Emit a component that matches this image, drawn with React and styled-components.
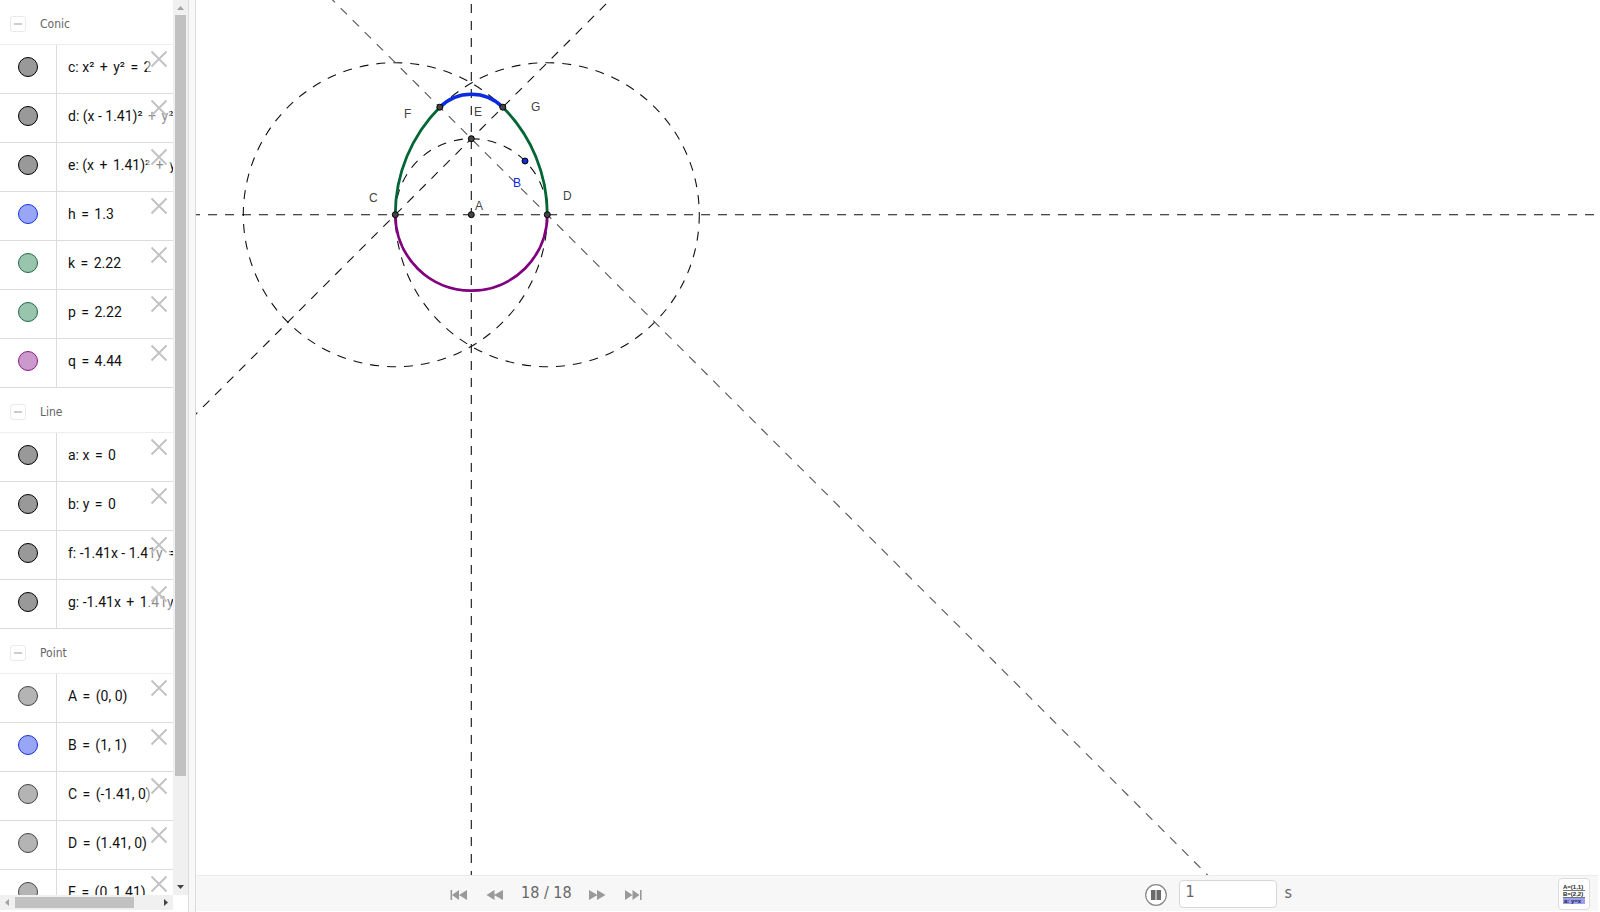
import React, { useState } from "react";
import styled, { createGlobalStyle } from "styled-components";

const GlobalStyle = createGlobalStyle`
  * {
    box-sizing: border-box;
  }
  body {
    margin: 0;
    background: #fff;
    font-family: "DejaVu Sans Condensed", "DejaVu Sans", sans-serif;
  }
  button {
    padding: 0;
    border: none;
    background: none;
    cursor: pointer;
  }
`;

const App = styled.div`
  display: flex;
  height: 100vh;
  padding-right: 2px;
  overflow: hidden;
`;

/* algebra view */

const Sidebar = styled.aside`
  display: grid;
  grid-template-columns: 1fr 15px;
  grid-template-rows: 1fr 15px;
  flex: none;
  width: 188px;
  padding-bottom: 2px;
`;

const List = styled.div`
  min-height: 0;
  overflow: hidden;
`;

const GroupHeader = styled.div`
  display: flex;
  align-items: center;
  gap: 14px;
  height: 45px;
  padding: 4px 0 0 10px;
  border-bottom: 1px solid #eee;
`;

const Collapse = styled.button`
  display: flex;
  align-items: center;
  justify-content: center;
  width: 16px;
  height: 16px;
  border: 1px solid #eaeaea;
  border-radius: 3px;

  &::before {
    content: "";
    width: 8px;
    height: 2px;
    background: #ccc;
  }
`;

const GroupName = styled.h2`
  margin: 0;
  color: #666;
  font-size: 12px;
  font-weight: 400;
  line-height: 16px;
`;

const Rows = styled.ul`
  margin: 0;
  padding: 0;
  list-style: none;
`;

const Row = styled.li`
  position: relative;
  display: flex;
  height: 49px;
  border-bottom: 1px solid #dcdcdc;
`;

const ChipCell = styled.div`
  display: flex;
  align-items: center;
  justify-content: center;
  flex: none;
  width: 57px;
  padding-bottom: 4px;
  border-right: 1px solid #dcdcdc;
`;

const Chip = styled.button`
  width: 20px;
  height: 20px;
  border: 1px solid ${(props) => props.$line};
  border-radius: 50%;
  background: ${(props) => props.$fill};
`;

const Formula = styled.span`
  flex: none;
  padding: 12px 0 0 11px;
  color: #111;
  font-family: Roboto, "Noto Sans", sans-serif;
  font-size: 14px;
  line-height: 20px;
  white-space: pre;
`;

const Operator = styled.span`
  margin: 0 2px;
`;

const Remove = styled.button`
  position: absolute;
  top: 2px;
  right: 2px;
  display: flex;
  align-items: center;
  justify-content: center;
  width: 24px;
  height: 44px;
  padding-bottom: 20px;
  background: rgba(255, 255, 255, 0.5);
`;

const VerticalBar = styled.div`
  display: flex;
  flex-direction: column;
  align-items: center;
  background: #f0f0f0;
`;

const HorizontalBar = styled.div`
  display: flex;
  align-items: center;
  background: #f0f0f0;
`;

const ScrollTrack = styled.div`
  flex: 1;
  ${(props) => (props.$vertical ? "width: 11px;" : "height: 11px;")}
`;

const ScrollThumb = styled.div`
  background: #c1c1c1;
  width: ${(props) => (props.$vertical ? "100%" : "83%")};
  height: ${(props) => (props.$vertical ? "88%" : "100%")};
`;

const ArrowButton = styled.button`
  display: flex;
  align-items: center;
  justify-content: center;
  flex: none;
  width: 15px;
  height: 15px;
`;

const Splitter = styled.div`
  flex: none;
  width: 8px;
  border: solid #dcdcdc;
  border-width: 0 1px;
  background: #f8f8f8;
  cursor: col-resize;
`;

/* graphics view */

const Main = styled.main`
  display: flex;
  flex-direction: column;
  flex: 1;
  min-width: 0;
  padding-bottom: 1px;
`;

const Canvas = styled.svg`
  display: block;
  flex: 1;
  width: 100%;
  min-height: 0;
  overflow: hidden;
`;

const Guide = styled.g`
  fill: none;
  stroke: ${(props) => props.$color || "#111"};
  stroke-width: 1.1;
  stroke-dasharray: 9 8;
`;

const Arc = styled.path`
  fill: none;
  stroke: ${(props) => props.$color};
  stroke-width: ${(props) => props.$thick || 2.8};
`;

const Point = styled.circle`
  fill: ${(props) => props.$color || "#444"};
  stroke: #000;
  stroke-width: 1;
`;

const Label = styled.text`
  fill: ${(props) => props.$color || "#444"};
  font-family: "Liberation Sans", Arial, sans-serif;
  font-size: 12px;
`;

const Toolbar = styled.footer`
  display: flex;
  align-items: center;
  flex: none;
  height: 36px;
  padding: 0 8px 0 254px;
  border-top: 1px solid #ebebeb;
  background: #f7f7f7;
  color: #666;
  font-size: 16px;
`;

const StepNav = styled.nav`
  display: flex;
  align-items: center;
  gap: 18px;
`;

const StepButton = styled.button`
  display: flex;
  width: 18px;
  height: 12px;
  margin-top: 3px;
`;

const StepCount = styled.span`
  margin: 0 -1px;
  padding-bottom: 2px;
  line-height: 20px;
  white-space: nowrap;
`;

const Player = styled.div`
  display: flex;
  align-items: center;
  margin: 0 266px 0 auto;
`;

const PlayButton = styled.button`
  display: flex;
  margin: 3px 12px 0 0;
`;

const Speed = styled.input`
  width: 98px;
  height: 28px;
  padding: 0 6px 4px;
  border: 1px solid #d8d8d8;
  border-radius: 4px;
  background: #fff;
  color: #666;
  font: inherit;
`;

const Unit = styled.label`
  margin-left: 8px;
  padding-bottom: 2px;
`;

const ProtocolButton = styled.button`
  display: flex;
  align-items: center;
  justify-content: center;
  width: 32px;
  height: 32px;
  border: 1px solid #dcdcdc;
  border-radius: 4px;
  background: #fff;
`;

const IconText = styled.text`
  fill: #222;
  font-family: "Liberation Sans", Arial, sans-serif;
  font-size: 6px;
  font-weight: 700;
`;

const colors = {
  black: ["#999", "#000"],
  gray: ["#b4b4b4", "#444"],
  blue: ["#99a5f5", "#1432e0"],
  green: ["#99c4ae", "#1f6b42"],
  purple: ["#cc99cc", "#8a1a8a"],
};

const groups = [
  {
    name: "Conic",
    items: [
      ["c: x² + y² = 2", "black"],
      ["d: (x - 1.41)² + y² = 8", "black"],
      ["e: (x + 1.41)² + y² = 8", "black"],
      ["h = 1.3", "blue"],
      ["k = 2.22", "green"],
      ["p = 2.22", "green"],
      ["q = 4.44", "purple"],
    ],
  },
  {
    name: "Line",
    items: [
      ["a: x = 0", "black"],
      ["b: y = 0", "black"],
      ["f: -1.41x - 1.41y = -2", "black"],
      ["g: -1.41x + 1.41y = 2", "black"],
    ],
  },
  {
    name: "Point",
    items: [
      ["A = (0, 0)", "gray"],
      ["B = (1, 1)", "blue"],
      ["C = (-1.41, 0)", "gray"],
      ["D = (1.41, 0)", "gray"],
      ["E = (0, 1.41)", "gray"],
    ],
  },
];

const points = [
  { name: "A", x: 275.3, y: 214.7, lx: 279, ly: 210 },
  { name: "B", x: 329, y: 161, lx: 317, ly: 187, color: "#0a2be0" },
  { name: "C", x: 199.3, y: 214.7, lx: 173, ly: 202 },
  { name: "D", x: 351.3, y: 214.7, lx: 367, ly: 200 },
  { name: "E", x: 275.3, y: 138.7, lx: 278, ly: 116 },
  { name: "F", x: 243.8, y: 107.2, lx: 208, ly: 118 },
  { name: "G", x: 306.8, y: 107.2, lx: 335, ly: 111 },
];

const Expression = ({ text }) => (
  <Formula>
    {text.split(/([=+])/).map((part, index) =>
      part === "=" || part === "+" ? <Operator key={index}>{part}</Operator> : part
    )}
  </Formula>
);

const AlgebraRow = ({ text, color }) => {
  const [fill, line] = colors[color];
  return (
    <Row>
      <ChipCell>
        <Chip $fill={fill} $line={line} aria-label="Show / hide object" />
      </ChipCell>
      <Expression text={text} />
      <Remove aria-label="Delete">
        <svg width="18" height="18" viewBox="0 0 18 18">
          <path d="M1.5 1.5 16.5 16.5M16.5 1.5 1.5 16.5" stroke="#c2c2c2" strokeWidth="1.9" />
        </svg>
      </Remove>
    </Row>
  );
};

const Arrow = ({ d, color, label }) => (
  <ArrowButton aria-label={label}>
    <svg width="15" height="15" viewBox="0 0 15 15">
      <path d={d} fill={color} />
    </svg>
  </ArrowButton>
);

const Step = ({ d, label }) => (
  <StepButton aria-label={label}>
    <svg width="18" height="12" viewBox="0 0 18 12">
      <path d={d} fill="#999" />
    </svg>
  </StepButton>
);

const Graphics = () => (
  <Canvas>
    <Guide>
      <circle cx="275.3" cy="214.7" r="76" />
      <circle cx="351.3" cy="214.7" r="152" />
      <circle cx="199.3" cy="214.7" r="152" />
      <line x1="275.3" y1="-13" x2="275.3" y2="3000" />
      <line x1="-5" y1="214.8" x2="4000" y2="214.8" />
      <line x1="-5" y1="419" x2="424" y2="-10" />
    </Guide>
    <Guide $color="#555">
      <line x1="132.6" y1="-4" x2="2132.6" y2="1996" />
    </Guide>
    <Arc $color="#0a2be0" $thick={3.5} d="M243.8 107.2A44.5 44.5 0 0 1 306.8 107.2" />
    <Arc $color="#006633" d="M199.3 214.7A152 152 0 0 1 243.8 107.2" />
    <Arc $color="#006633" d="M351.3 214.7A152 152 0 0 0 306.8 107.2" />
    <Arc $color="#800080" d="M199.3 214.7A76 76 0 0 0 351.3 214.7" />
    {points.map((p) => (
      <g key={p.name}>
        <Point cx={p.x} cy={p.y} r="3" $color={p.color} />
        <Label x={p.lx} y={p.ly} $color={p.color}>{p.name}</Label>
      </g>
    ))}
  </Canvas>
);

const GeometryApp = () => {
  const [speed, setSpeed] = useState("1");

  return (
    <>
      <GlobalStyle />
      <App>
        <Sidebar>
          <List>
            {groups.map((group) => (
              <section key={group.name}>
                <GroupHeader>
                  <Collapse aria-label="Collapse" />
                  <GroupName>{group.name}</GroupName>
                </GroupHeader>
                <Rows>
                  {group.items.map(([text, color]) => (
                    <AlgebraRow key={text} text={text} color={color} />
                  ))}
                </Rows>
              </section>
            ))}
          </List>
          <VerticalBar>
            <Arrow label="Scroll up" color="#a3a3a3" d="M4 10h7L7.5 6z" />
            <ScrollTrack $vertical>
              <ScrollThumb $vertical />
            </ScrollTrack>
            <Arrow label="Scroll down" color="#444" d="M4 5h7L7.5 9z" />
          </VerticalBar>
          <HorizontalBar>
            <Arrow label="Scroll left" color="#a3a3a3" d="M9 4v7L5 7.5z" />
            <ScrollTrack>
              <ScrollThumb />
            </ScrollTrack>
            <Arrow label="Scroll right" color="#444" d="M6 4v7l4-3.5z" />
          </HorizontalBar>
        </Sidebar>
        <Splitter />
        <Main>
          <Graphics />
          <Toolbar>
            <StepNav>
              <Step label="First step" d="M0.5 1h1.6v10H0.5zM9 1v10L2 6zM17 1v10L9 6z" />
              <Step label="Previous step" d="M8.5 1v10L0.5 6zM17 1v10L8 6z" />
              <StepCount>18 / 18</StepCount>
              <Step label="Next step" d="M0 1v10l8.5-5zM8 1v10l8.5-5z" />
              <Step label="Last step" d="M0 1v10l7.5-5zM7.5 1v10l7-5zM15 1h1.6v10H15z" />
            </StepNav>
            <Player>
              <PlayButton aria-label="Pause">
                <svg width="22" height="22" viewBox="0 0 22 22">
                  <circle cx="11" cy="11" r="10.3" fill="#fff" stroke="#888" strokeWidth="1.2" />
                  <path d="M6 6h4.5v10H6zM11.5 6H16v10h-4.5z" fill="#6b6b6b" />
                </svg>
              </PlayButton>
              <Speed id="speed" value={speed} onChange={(e) => setSpeed(e.target.value)} />
              <Unit htmlFor="speed">s</Unit>
            </Player>
            <ProtocolButton aria-label="Construction protocol">
              <svg width="24" height="24" viewBox="0 0 24 24">
                <rect x="1" y="16" width="22" height="6" fill="#99a0f5" />
                <path d="M1 8.5h22M1 15.5h22" stroke="#555" strokeWidth="0.8" />
                <IconText x="1" y="7">A=(1,1)</IconText>
                <IconText x="1" y="14">B=(2,2)</IconText>
                <IconText x="2" y="21">a: y=x</IconText>
              </svg>
            </ProtocolButton>
          </Toolbar>
        </Main>
      </App>
    </>
  );
};

export default GeometryApp;
